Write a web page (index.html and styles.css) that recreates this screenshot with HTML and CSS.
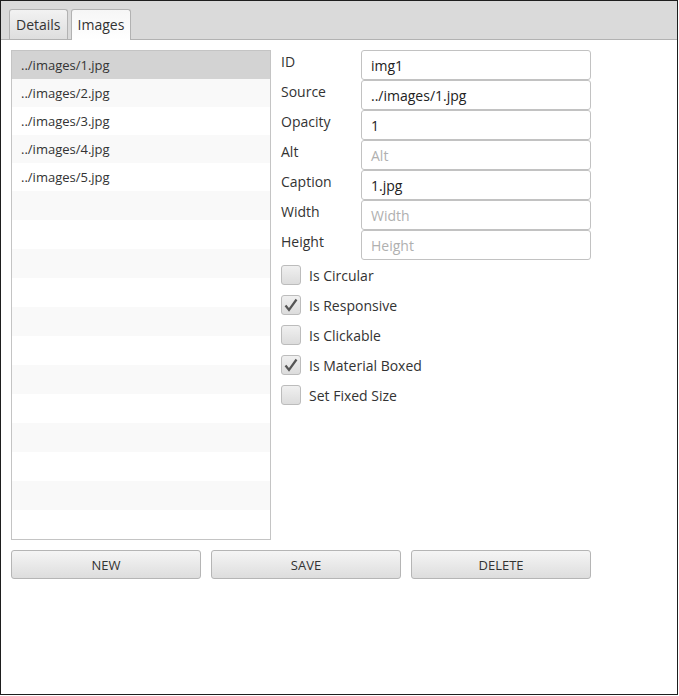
FILE: index.html
```html
<!DOCTYPE html>
<html lang="en">
<head>
    <meta charset="UTF-8">
    <link rel="stylesheet" href="styles.css">
    <title>Images</title>
</head>
<body>
    <div class="window">
        <div class="tab-header">
            <div class="tab">Details</div>
            <div class="tab tab-selected">Images</div>
        </div>
        <div class="content">
            <div class="top">
                <div class="list">
                    <div class="row row-selected">../images/1.jpg</div>
                    <div class="row">../images/2.jpg</div>
                    <div class="row">../images/3.jpg</div>
                    <div class="row">../images/4.jpg</div>
                    <div class="row">../images/5.jpg</div>
                    <div class="row empty"></div>
                    <div class="row empty"></div>
                    <div class="row empty"></div>
                    <div class="row empty"></div>
                    <div class="row empty"></div>
                    <div class="row empty"></div>
                    <div class="row empty"></div>
                    <div class="row empty"></div>
                    <div class="row empty"></div>
                    <div class="row empty"></div>
                    <div class="row empty"></div>
                    <div class="row empty"></div>
                </div>
                <div class="form">
                    <div class="fields">
                        <div class="label">ID</div>
                        <div class="field">img1</div>
                        <div class="label">Source</div>
                        <div class="field">../images/1.jpg</div>
                        <div class="label">Opacity</div>
                        <div class="field">1</div>
                        <div class="label">Alt</div>
                        <div class="field placeholder">Alt</div>
                        <div class="label">Caption</div>
                        <div class="field">1.jpg</div>
                        <div class="label">Width</div>
                        <div class="field placeholder">Width</div>
                        <div class="label">Height</div>
                        <div class="field placeholder">Height</div>
                    </div>
                    <div class="checks">
                        <div class="check"><span class="box"></span>Is Circular</div>
                        <div class="check"><span class="box"><svg width="20" height="20" viewBox="0 0 20 20"><polyline points="4.5,10.5 8,15 15.5,4.5" fill="none" stroke="#555" stroke-width="2.2"/></svg></span>Is Responsive</div>
                        <div class="check"><span class="box"></span>Is Clickable</div>
                        <div class="check"><span class="box"><svg width="20" height="20" viewBox="0 0 20 20"><polyline points="4.5,10.5 8,15 15.5,4.5" fill="none" stroke="#555" stroke-width="2.2"/></svg></span>Is Material Boxed</div>
                        <div class="check"><span class="box"></span>Set Fixed Size</div>
                    </div>
                </div>
            </div>
            <div class="buttons">
                <div class="button btn-new">NEW</div>
                <div class="button btn-save">SAVE</div>
                <div class="button btn-delete">DELETE</div>
            </div>
        </div>
    </div>
</body>
</html>
```

FILE: styles.css
```css
body{
    margin: 0;
    padding: 0;
    font-family: "Open Sans", "Noto Sans", sans-serif;
    font-size: 13px;
    color: #333;
}
.window{
    width: 678px;
    height: 695px;
    box-sizing: border-box;
    border: 1px solid #1e1e1e;
    background-color: #fff;
    display: flex;
    flex-direction: column;
}
.tab-header{
    height: 39px;
    box-sizing: border-box;
    background-color: #dadada;
    border-bottom: 1px solid #b2b2b2;
    display: flex;
    align-items: flex-end;
    padding-left: 8px;
    gap: 3px;
}
.tab{
    height: 30px;
    box-sizing: border-box;
    padding: 0 6px;
    border: 1px solid #b2b2b2;
    border-bottom: none;
    border-radius: 3px 3px 0 0;
    background: linear-gradient(#f2f2f2, #dedede);
    display: flex;
    align-items: center;
    font-size: 14px;
    color: #333;
}
.tab-selected{
    background: linear-gradient(#f6f6f6, #fff);
    margin-bottom: -1px;
    height: 31px;
    padding-bottom: 1px;
}
.content{
    padding: 10px 0 0 10px;
}
.top{
    display: flex;
    gap: 10px;
}
.list{
    width: 260px;
    height: 490px;
    box-sizing: border-box;
    border: 1px solid #c4c4c4;
    overflow: hidden;
}
.row{
    height: 28px;
    line-height: 28px;
    padding-left: 9px;
    background-color: #fff;
}
.row:nth-child(even){
    background-color: #f9f9f9;
}
.row.empty{
    height: 29px;
}
.row-selected{
    background-color: #d3d3d3;
}
.form{
    width: 310px;
}
.fields{
    display: grid;
    grid-template-columns: 80px 230px;
    grid-auto-rows: 30px;
}
.label{
    font-size: 14px;
    padding-top: 2px;
    color: #333;
}
.field{
    box-sizing: border-box;
    height: 30px;
    border: 1px solid #c2c2c2;
    border-radius: 3px;
    padding-left: 9px;
    display: flex;
    align-items: center;
    font-size: 14px;
    color: #222;
    background-color: #fff;
}
.placeholder{
    color: #b0b0b0;
}
.checks{
    margin-top: 5px;
    display: flex;
    flex-direction: column;
    gap: 10px;
}
.check{
    display: flex;
    align-items: center;
    gap: 8px;
    height: 20px;
    font-size: 14px;
    color: #333;
}
.box{
    width: 20px;
    height: 20px;
    box-sizing: border-box;
    border: 1px solid #bcbcbc;
    border-radius: 3px;
    background: linear-gradient(#f0f0f0, #dcdcdc);
    display: flex;
    align-items: center;
    justify-content: center;
}
.box svg{
    margin: -1px;
}
.buttons{
    margin-top: 10px;
    display: flex;
    gap: 10px;
}
.button{
    height: 29px;
    box-sizing: border-box;
    border: 1px solid #b5b5b5;
    border-radius: 3px;
    background: linear-gradient(#f5f5f5, #dddddd);
    display: flex;
    align-items: center;
    justify-content: center;
    font-size: 13px;
    color: #333;
}
.btn-new, .btn-save{
    width: 190px;
}
.btn-delete{
    width: 180px;
}
```
